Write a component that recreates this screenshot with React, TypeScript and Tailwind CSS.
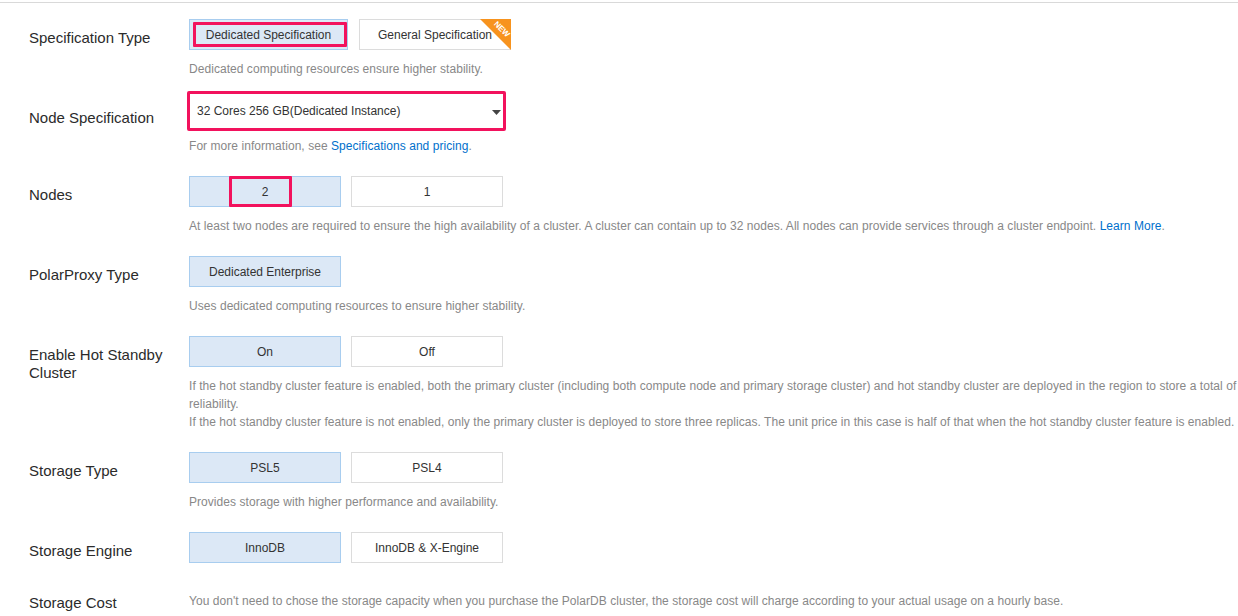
import React from "react";

const FONT = { fontFamily: '"Liberation Sans", Arial, Helvetica, sans-serif' };

function Label({ children, pt = "pt-[10px]" }: { children: React.ReactNode; pt?: string }) {
  return (
    <div className={`w-[160px] shrink-0 ${pt} text-[15px] leading-[18px] text-[#2b2b2b]`}>
      {children}
    </div>
  );
}

function Option({
  children,
  active,
  width = "w-[152px]",
  extra,
}: {
  children?: React.ReactNode;
  active?: boolean;
  width?: string;
  extra?: React.ReactNode;
}) {
  return (
    <div
      className={`relative ${width} h-[31px] flex items-center justify-center text-[12px] text-[#333] border ${
        active ? "bg-[#dce8f6] border-[#a8cdef]" : "bg-white border-[#dcdcdc]"
      }`}
    >
      {children}
      {extra}
    </div>
  );
}

function Help({ children, mt = "mt-[10px]" }: { children: React.ReactNode; mt?: string }) {
  return (
    <div className={`${mt} text-[12px] leading-[18px] tracking-[0.05px] text-[#888] whitespace-nowrap`}>
      {children}
    </div>
  );
}

const RED = "border-[#f2125d]";

export default function App() {
  return (
    <div style={FONT} className="relative w-[1238px] h-[616px] overflow-hidden bg-white">
      <div className="pt-[2px]">
        <div className="h-px bg-[#d9d9d9]" />
      </div>

      <div className="pl-[29px]">
        {/* Specification Type */}
        <div className="flex mt-[16px]">
          <Label>Specification Type</Label>
          <div>
            <div className="flex gap-[11px]">
              <Option
                active
                width="w-[159px]"
                extra={
                  <span className={`absolute left-[3px] right-0 top-[2px] bottom-[2px] border-[3px] ${RED} rounded-[1px]`} />
                }
              >
                Dedicated Specification
              </Option>
              <Option
                width="w-[152px]"
                extra={
                  <svg className="absolute -top-px -right-px overflow-visible" width="31" height="31" viewBox="0 0 31 31">
                    <polygon points="0,0 31,0 31,31" fill="#f7931e" />
                    <text
                      x="20"
                      y="12"
                      fill="#fff"
                      fontSize="8"
                      fontWeight="bold"
                      textAnchor="middle"
                      transform="rotate(45 20 12)"
                      style={FONT}
                    >
                      NEW
                    </text>
                  </svg>
                }
              >
                General Specification
              </Option>
            </div>
            <Help>Dedicated computing resources ensure higher stability.</Help>
          </div>
        </div>

        {/* Node Specification */}
        <div className="flex mt-[13px]">
          <Label pt="pt-[18px]">Node Specification</Label>
          <div>
            <div className={`-ml-[2px] w-[319px] h-[40px] border-[3px] ${RED} rounded-[2px] flex items-center justify-between pl-[7px] pr-[2px] text-[12px] text-[#333]`}>
              <span>32 Cores 256 GB(Dedicated Instance)</span>
              <svg width="9" height="6" viewBox="0 0 9 6" className="mt-[3px]">
                <polygon points="0,0 9,0 4.5,5" fill="#444" />
              </svg>
            </div>
            <Help mt="mt-[6px]">
              For more information, see <span className="text-[#0070cc]">Specifications and pricing</span>.
            </Help>
          </div>
        </div>

        {/* Nodes */}
        <div className="flex mt-[21px]">
          <Label>Nodes</Label>
          <div>
            <div className="flex gap-[10px]">
              <Option
                active
                extra={<span className={`absolute left-[39px] w-[63px] -top-px -bottom-px border-[3px] ${RED} rounded-[1px]`} />}
              >
                2
              </Option>
              <Option>1</Option>
            </div>
            <Help>
              At least two nodes are required to ensure the high availability of a cluster. A cluster can contain up to 32
              nodes. All nodes can provide services through a cluster endpoint.{" "}
              <span className="text-[#0070cc]">Learn More</span>.
            </Help>
          </div>
        </div>

        {/* PolarProxy Type */}
        <div className="flex mt-[21px]">
          <Label>PolarProxy Type</Label>
          <div>
            <div className="flex gap-[10px]">
              <Option active>Dedicated Enterprise</Option>
            </div>
            <Help>Uses dedicated computing resources to ensure higher stability.</Help>
          </div>
        </div>

        {/* Hot standby */}
        <div className="flex mt-[21px]">
          <Label>
            Enable Hot Standby
            <br />
            Cluster
          </Label>
          <div>
            <div className="flex gap-[10px]">
              <Option active>On</Option>
              <Option>Off</Option>
            </div>
            <Help>
              If the hot standby cluster feature is enabled, both the primary cluster (including both compute node and
              primary storage cluster) and hot standby cluster are deployed in the region to store a total of six replicas
              for higher
            </Help>
            <Help mt="mt-0">reliability.</Help>
            <Help mt="mt-0">
              If the hot standby cluster feature is not enabled, only the primary cluster is deployed to store three
              replicas. The unit price in this case is half of that when the hot standby cluster feature is enabled.
            </Help>
          </div>
        </div>

        {/* Storage Type */}
        <div className="flex mt-[21px]">
          <Label>Storage Type</Label>
          <div>
            <div className="flex gap-[10px]">
              <Option active>PSL5</Option>
              <Option>PSL4</Option>
            </div>
            <Help>Provides storage with higher performance and availability.</Help>
          </div>
        </div>

        {/* Storage Engine */}
        <div className="flex mt-[21px]">
          <Label>Storage Engine</Label>
          <div className="flex gap-[10px]">
            <Option active>InnoDB</Option>
            <Option>InnoDB &amp; X-Engine</Option>
          </div>
        </div>

        {/* Storage Cost */}
        <div className="flex mt-[29px]">
          <Label pt="pt-[2px]">Storage Cost</Label>
          <Help mt="mt-0">
            You don't need to chose the storage capacity when you purchase the PolarDB cluster, the storage cost will
            charge according to your actual usage on a hourly base.
          </Help>
        </div>
      </div>
    </div>
  );
}
